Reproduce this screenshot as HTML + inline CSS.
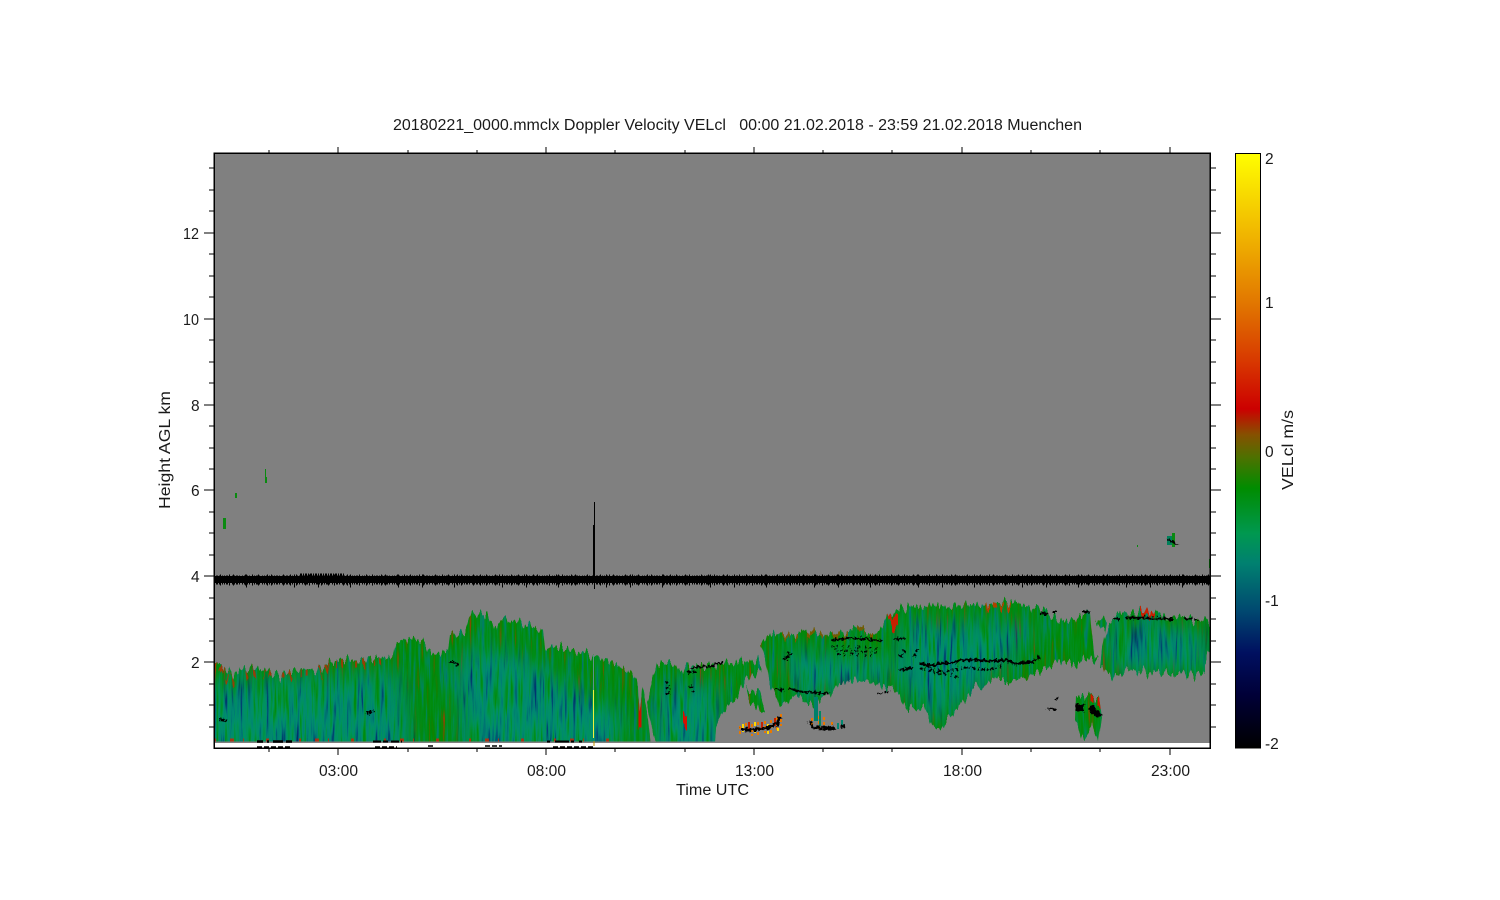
<!DOCTYPE html>
<html><head><meta charset="utf-8"><title>Doppler Velocity</title>
<style>html,body{margin:0;padding:0;background:#fff}svg{display:block}text{font-family:"Liberation Sans",Arial,sans-serif;fill:#1a1a1a;font-size:15.5px}</style></head>
<body>
<svg xmlns="http://www.w3.org/2000/svg" width="1500" height="900" viewBox="0 0 1500 900">
<defs>
<linearGradient id="cb" x1="0" y1="0" x2="0" y2="1">
<stop offset="0" stop-color="#ffff00"/><stop offset=".14" stop-color="#f0b400"/><stop offset=".264" stop-color="#e07000"/><stop offset=".35" stop-color="#d83800"/><stop offset=".43" stop-color="#cc0000"/><stop offset=".473" stop-color="#865000"/><stop offset=".51" stop-color="#507000"/><stop offset=".563" stop-color="#008c00"/><stop offset=".64" stop-color="#009850"/><stop offset=".69" stop-color="#008070"/><stop offset=".77" stop-color="#004870"/><stop offset=".84" stop-color="#001060"/><stop offset=".91" stop-color="#000038"/><stop offset="1" stop-color="#000000"/>
</linearGradient>
<filter id="fg" x="0" y="0" width="100%" height="100%" color-interpolation-filters="sRGB">
<feTurbulence type="fractalNoise" baseFrequency="0.33 0.02" numOctaves="3" seed="3"/>
<feColorMatrix values="1 0 0 0 0 1 0 0 0 0 1 0 0 0 0 0 0 0 0 1"/>
<feComponentTransfer>
<feFuncR type="table" tableValues="0 0 0 0 0 0 0 .1 .4 .7 .8"/>
<feFuncG type="table" tableValues=".3 .38 .48 .53 .55 .55 .54 .5 .35 .2 .15"/>
<feFuncB type="table" tableValues=".45 .45 .42 .34 .16 .07 .03 0 0 0 0"/>
</feComponentTransfer>
</filter>
<filter id="ft" x="0" y="0" width="100%" height="100%" color-interpolation-filters="sRGB">
<feTurbulence type="fractalNoise" baseFrequency="0.3 0.018" numOctaves="3" seed="11"/>
<feColorMatrix values="1 0 0 0 0 1 0 0 0 0 1 0 0 0 0 0 0 0 0 1"/>
<feComponentTransfer>
<feFuncR type="table" tableValues="0 0 0 0 0 0 0 0 0 0 0"/>
<feFuncG type="table" tableValues=".08 .12 .22 .4 .52 .56 .58 .57 .55 .55 .55"/>
<feFuncB type="table" tableValues=".4 .42 .44 .45 .45 .42 .34 .2 .06 .04 .04"/>
</feComponentTransfer>
</filter>
<filter id="jag" filterUnits="userSpaceOnUse" x="205" y="590" width="1015" height="170" color-interpolation-filters="sRGB">
<feTurbulence type="fractalNoise" baseFrequency="0.28 0.015" numOctaves="2" seed="7" result="n"/>
<feColorMatrix in="n" values="0 0 0 0 .5 1 0 0 0 0 0 0 0 0 0 0 0 0 0 1" result="m"/>
<feDisplacementMap in="SourceGraphic" in2="m" scale="22" xChannelSelector="R" yChannelSelector="G"/>
</filter>
<filter id="jagb" filterUnits="userSpaceOnUse" x="205" y="500" width="1015" height="245" color-interpolation-filters="sRGB">
<feTurbulence type="fractalNoise" baseFrequency="0.35 0.35" numOctaves="2" seed="5" result="n"/>
<feColorMatrix in="n" values="1 0 0 0 0 0 1 0 0 0 0 0 0 0 0 0 0 0 0 1" result="m"/>
<feDisplacementMap in="SourceGraphic" in2="m" scale="6" xChannelSelector="R" yChannelSelector="G"/>
</filter>
<filter id="blur" x="-20%" y="-20%" width="140%" height="140%"><feGaussianBlur stdDeviation="10"/></filter>
<clipPath id="bot"><rect x="215" y="590" width="995" height="151.5"/></clipPath>
<clipPath id="cloud">
<polygon points="214,660 225,667 228,673 257,667 280,675 300,670 317,670 335,660 360,660 393,657 395,645 407,637 423,643 430,653 448,652 450,635 465,632 472,613 487,615 490,623 515,622 533,630 543,627 545,647 567,647 583,652 610,662 633,673 638,687 640,720 636,760 205,760 205,660"/>
<polygon points="647,700 652,680 657,663 673,663 680,673 688,665 700,667 724,663 758,661 762,670 745,680 738,695 725,710 716,725 714,760 660,760 652,730"/>
<polygon points="636,760 642,690 648,715 652,760"/>
<polygon points="760,644 767,637 782,633 882,630 886,620 892,612 913,606 992,605 1006,601 1023,605 1044,610 1061,617 1065,624 1082,618 1083,612 1090,612 1092,636 1095,656 1099,662 1090,658 1075,665 1058,661 1044,670 1023,680 992,680 972,690 956,711 941,728 934,728 924,708 906,708 899,690 882,687 858,680 838,687 829,698 813,704 796,698 779,704 769,680 765,656"/>
<polygon points="746,690 760,690 765,708 760,712 750,700"/>
<polygon points="1108,625 1118,613 1147,612 1171,617 1212,622 1212,642 1205,663 1205,675 1181,673 1161,673 1130,670 1115,677 1100,667 1102,650"/>
<polygon points="1095,622 1107,618 1105,632 1100,628"/>
<polygon points="1076,697 1099,697 1102,715 1098,742 1092,725 1085,742 1075,722"/>
<rect x="815" y="703" width="3" height="18"/>
</clipPath>
<mask id="mt" maskUnits="userSpaceOnUse" x="214" y="153" width="996" height="595">
<g fill="#fff" filter="url(#blur)">
<polygon points="190,685 400,670 415,760 190,760"/>
<polygon points="450,675 480,640 530,660 625,715 620,760 470,760"/>
<polygon points="780,650 900,660 880,680 800,700"/>
<polygon points="900,620 1040,625 1000,670 960,700 930,725 900,680"/>
<polygon points="1110,625 1205,630 1205,670 1110,670"/>
<polygon points="655,690 720,680 720,760 650,760"/>
</g>
</mask>
</defs>

<rect width="1500" height="900" fill="#fff"/>
<rect x="214" y="153" width="996" height="590" fill="#808080"/>
<rect x="214" y="743" width="996" height="5" fill="#fff"/>

<g clip-path="url(#bot)">
<g filter="url(#jag)">
<g clip-path="url(#cloud)">
<rect x="205" y="590" width="1015" height="170" filter="url(#fg)"/>
<rect x="205" y="590" width="1015" height="170" filter="url(#ft)" mask="url(#mt)"/>
<g fill="none">
<path d="M214,664 225,671 228,677 257,671 280,679 300,674 317,674 335,664 360,664 393,661" stroke="#b03000" stroke-width="7" stroke-dasharray="2 5 3 9 1 4 2 12" opacity=".85"/>
<path d="M640,690 640,730" stroke="#cc1000" stroke-width="3"/>
<path d="M685,716 685,728" stroke="#d81000" stroke-width="4"/>
<path d="M782,634 880,632" stroke="#905000" stroke-width="5" stroke-dasharray="8 5 3 9" opacity=".8"/>
<path d="M886,616 895,618 895,628" stroke="#c82000" stroke-width="6"/>
<path d="M986,608 1012,604" stroke="#b04000" stroke-width="5" stroke-dasharray="4 3"/>
<path d="M1140,615 1155,615" stroke="#c82000" stroke-width="6"/>
<path d="M1092,698 1092,706 M1099,698 1099,708" stroke="#d01800" stroke-width="3"/>
</g>
</g>
</g>
<path d="M214,740 636,740" stroke="#d02000" stroke-width="3" fill="none" stroke-dasharray="2 14 4 9 1 22 3 30" opacity=".8"/>
</g>

<!-- small echoes -->
<g fill="#0a8a10">
<rect x="265" y="469" width="1" height="8"/><rect x="265" y="477" width="2" height="6"/>
<rect x="235" y="493" width="2" height="5"/>
<rect x="223" y="518" width="3" height="11"/>
<rect x="214" y="483" width="1" height="8"/>
<rect x="1167" y="536" width="8" height="9" fill="#00805a"/>
<rect x="1172" y="533" width="3" height="14"/>
<rect x="1209" y="559" width="1" height="9"/>
<rect x="1137" y="545" width="1" height="2"/>
<rect x="814" y="697" width="4" height="24" fill="#00806a"/>
</g>

<!-- orange echoes -->
<g fill="none" stroke-width="2">
<path d="M740,726V734M746,723V733M752,724V736M758,722V735M765,721V733M771,720V735M777,717V731M781,714V726" stroke="#e87800" stroke-dasharray="3 2"/>
<path d="M743,724V732M755,722V733M768,724V734M778,721V731" stroke="#ffd800" stroke-dasharray="4 3"/>
<path d="M749,722V730M762,722V730M775,718V726" stroke="#c82000"/>
<path d="M812,718V728M819,716V731M824,717V732M832,722V730" stroke="#e87800" stroke-dasharray="3 2"/>
<path d="M820,711V726" stroke="#008860" stroke-width="2"/>
<path d="M838,723V729M842,720V726" stroke="#008870" stroke-width="2"/>
</g>

<!-- black band -->
<g fill="none" stroke="#000">
<rect x="214" y="576" width="996" height="7" fill="#000" stroke="none"/>
<path d="M214,580H1210" stroke-width="9" stroke-dasharray="1 1 2 1 1 2 1 1"/>
<path d="M214,580H1210" stroke-width="11" stroke-dasharray="1 5 1 8 1 3 1 11 1 6"/>
<path d="M214,581H1210" stroke-width="13" stroke-dasharray="1 31 1 47 1 23"/>
<path d="M300,575H345" stroke-width="3" stroke-dasharray="2 1 1 1"/>
<path d="M594.5,502V589" stroke-width="1"/>
<path d="M594,525V580" stroke-width="2"/>
</g>

<!-- black features -->
<g fill="none" stroke="#000" stroke-linejoin="round" filter="url(#jagb)">
<path d="M691,668 700,667 712,666 724,661" stroke-width="2"/>
<path d="M831,640 850,638 865,639 882,641" stroke-width="2"/>
<path d="M893,639 906,638" stroke-width="2"/>
<path d="M920,663 930,666 941,663 952,663 961,660 975,660 992,661 1006,660 1015,664 1023,663 1032,662 1040,657" stroke-width="2.5"/>
<path d="M920,668 945,672 965,667 990,670 1002,666" stroke-width="3" stroke-dasharray="3 2 1 3"/>
<path d="M932,672 960,677" stroke-width="2" stroke-dasharray="2 4"/>
<path d="M900,670 912,668" stroke-width="2.5"/>
<path d="M775,689 784,690 M789,689 805,692 820,693 829,694" stroke-width="2"/>
<path d="M1040,613 1049,614 M1052,612 1058,612" stroke-width="2"/>
<path d="M1082,612 1089,612" stroke-width="2.5"/>
<path d="M1114,618 1120,619 M1126,618 1147,618 1173,619" stroke-width="2.5"/>
<path d="M1185,619 1192,619 M1194,620 1199,620" stroke-width="2"/>
<path d="M1075,708 1084,708" stroke-width="7"/>
<path d="M1091,706 1094,712 1100,716" stroke-width="6"/>
<path d="M1047,708 1056,710" stroke-width="2"/>
<path d="M1055,700 1058,697" stroke-width="1.5"/>
<path d="M1167,540 1177,544" stroke-width="2"/>
<path d="M832,646 880,648" stroke-width="2" stroke-dasharray="1 3 2 5"/>
<path d="M835,650 878,652" stroke-width="2" stroke-dasharray="2 4 1 3"/>
<path d="M838,654 876,656" stroke-width="2" stroke-dasharray="2 4 1 6"/>
<path d="M784,661 790,653" stroke-width="3" stroke-dasharray="3 1"/>
<path d="M905,650 900,657 M917,650 914,656" stroke-width="3" stroke-dasharray="3 2"/>
<path d="M449,661 458,665" stroke-width="2"/>
<path d="M219,719 227,721" stroke-width="2" stroke-dasharray="2 1"/>
<path d="M366,714 374,711" stroke-width="3" stroke-dasharray="3 1"/>
<path d="M667,680 668,695 M691,685 693,692 M687,672 699,672" stroke-width="3" stroke-dasharray="3 3"/>
<path d="M740,729 750,730 760,729 770,727 778,723 780,717" stroke-width="3"/>
<path d="M813,728 835,728 M840,727 845,726" stroke-width="3.5"/>
<path d="M810,721 812,727" stroke-width="3"/>
<path d="M878,694 890,691" stroke-width="2" stroke-dasharray="4 2"/>
</g>
<g fill="none" stroke="#000">
<path d="M257,741.5 293,741.5" stroke-width="2.5" stroke-dasharray="6 4 2 4 10 3"/>
<path d="M373,741.5 402,741.5" stroke-width="2" stroke-dasharray="8 2 5 3"/>
<path d="M547,741.5 582,741.5" stroke-width="2" stroke-dasharray="3 5 14 2"/>
<path d="M257,747 292,747 M375,747 397,747 M428,746 435,746 M485,746 502,746 M553,747 593,747" stroke-width="1.5" stroke-dasharray="5 2"/>
</g>
<path d="M593.5,655V690" stroke="#5c9090" stroke-width="1"/>
<path d="M593.5,690V738" stroke="#f0f040" stroke-width="1"/>
<path d="M594,741V746" stroke="#c09000" stroke-width="1"/>

<!-- axes and ticks -->
<g stroke="#000" stroke-width="1" fill="none" shape-rendering="crispEdges">
<rect x="214" y="153" width="996" height="595" stroke-width="1.5"/>
<path d="M204,233H214M204,319H214M204,405H214M204,490H214M204,576H214M204,662H214"/>
<path d="M209,168H214M209,190H214M209,211H214M209,254H214M209,276H214M209,297H214M209,340H214M209,362H214M209,383H214M209,426H214M209,448H214M209,469H214M209,512H214M209,533H214M209,555H214M209,598H214M209,619H214M209,641H214M209,684H214M209,705H214M209,727H214"/>
<path d="M1210,233H1221M1210,319H1221M1210,405H1221M1210,490H1221M1210,576H1221M1210,662H1221"/>
<path d="M1210,168H1216M1210,190H1216M1210,211H1216M1210,254H1216M1210,276H1216M1210,297H1216M1210,340H1216M1210,362H1216M1210,383H1216M1210,426H1216M1210,448H1216M1210,469H1216M1210,512H1216M1210,533H1216M1210,555H1216M1210,598H1216M1210,619H1216M1210,641H1216M1210,684H1216M1210,705H1216M1210,727H1216"/>
<path d="M338,147V153M546,147V153M754,147V153M962,147V153M1170,147V153"/>
<path d="M269,150V153M408,150V153M477,150V153M615,150V153M685,150V153M823,150V153M892,150V153M1031,150V153M1100,150V153"/>
<path d="M338,748V755M546,748V755M754,748V755M962,748V755M1170,748V755"/>
<path d="M269,748V752M408,748V752M477,748V752M615,748V752M685,748V752M823,748V752M892,748V752M1031,748V752M1100,748V752"/>
</g>

<!-- colorbar -->
<rect x="1235" y="153" width="25" height="595" fill="url(#cb)"/>
<rect x="1235.5" y="153.5" width="25" height="594.5" fill="none" stroke="#000" stroke-width="1"/>

<!-- text -->
<text x="393" y="130" textLength="689" lengthAdjust="spacingAndGlyphs" xml:space="preserve">20180221_0000.mmclx Doppler Velocity VELcl   00:00 21.02.2018 - 23:59 21.02.2018 Muenchen</text>
<text x="183" y="239" textLength="16" lengthAdjust="spacingAndGlyphs">12</text>
<text x="183" y="325" textLength="16" lengthAdjust="spacingAndGlyphs">10</text>
<text x="191" y="411">8</text>
<text x="191" y="496">6</text>
<text x="191" y="582">4</text>
<text x="191" y="668">2</text>
<text x="319" y="776" textLength="39" lengthAdjust="spacingAndGlyphs">03:00</text>
<text x="527" y="776" textLength="39" lengthAdjust="spacingAndGlyphs">08:00</text>
<text x="735" y="776" textLength="39" lengthAdjust="spacingAndGlyphs">13:00</text>
<text x="943" y="776" textLength="39" lengthAdjust="spacingAndGlyphs">18:00</text>
<text x="1151" y="776" textLength="39" lengthAdjust="spacingAndGlyphs">23:00</text>
<text x="676" y="795" textLength="73" lengthAdjust="spacingAndGlyphs">Time UTC</text>
<text transform="translate(170,509) rotate(-90)" textLength="118" lengthAdjust="spacingAndGlyphs">Height AGL km</text>
<text transform="translate(1293,490) rotate(-90)" textLength="80" lengthAdjust="spacingAndGlyphs">VELcl m/s</text>
<text x="1265" y="164">2</text>
<text x="1265" y="308">1</text>
<text x="1265" y="457">0</text>
<text x="1265" y="606">-1</text>
<text x="1265" y="749">-2</text>
</svg>
</body></html>
